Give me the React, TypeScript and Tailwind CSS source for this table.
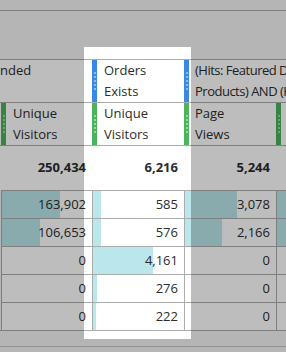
const COL_W = ['w-[91px]', 'w-[92px]', 'w-[92px]', 'w-[92px]'];

const TOTALS = ['250,434', '6,216', '5,244', '4,812'];

// value + bar width in px
const ROWS = [
  [{ v: '163,902', w: 58 }, { v: '585', w: 8 }, { v: '3,078', w: 52 }, { v: '2,941', w: 34 }],
  [{ v: '106,653', w: 38 }, { v: '576', w: 8 }, { v: '2,166', w: 37 }, { v: '1,871', w: 22 }],
  [{ v: '0', w: 0 }, { v: '4,161', w: 60 }, { v: '0', w: 0 }, { v: '0', w: 0 }],
  [{ v: '0', w: 0 }, { v: '276', w: 4 }, { v: '0', w: 0 }, { v: '0', w: 0 }],
  [{ v: '0', w: 0 }, { v: '222', w: 3 }, { v: '0', w: 0 }, { v: '0', w: 0 }],
];

function Grip({ color }: { color: string }) {
  return (
    <div className={`flex h-full w-[5px] shrink-0 flex-col items-center justify-center gap-[2px] ${color}`}>
      {[0, 1, 2, 3, 4].map((i) => (
        <span key={i} className="h-[2px] w-[2px] bg-white/45" />
      ))}
    </div>
  );
}

function HeadCell({ grip, w, pad = 'pl-[7px]', children }: { grip?: string; w: string; pad?: string; children?: React.ReactNode }) {
  return (
    <div className={`flex h-full shrink-0 ${w}`}>
      {grip && <Grip color={grip} />}
      <div className={`overflow-hidden leading-[21px] ${pad}`}>{children}</div>
    </div>
  );
}

export default function App() {
  return (
    <div className="relative h-[352px] w-[286px] overflow-hidden bg-[#f5f5f5] font-['Open_Sans',sans-serif] text-[13px] text-[#2c2c2c]">
      {/* white ghost behind the dragged column */}
      <div className="absolute left-[84px] top-[47px] h-[292px] w-[107px] bg-white" />

      <div className="relative">
        <div className="h-[11px] border-b border-[#acacac]" />
        <div className="h-[48px]" />

        {/* header row 1 */}
        <div className="flex h-[43px] border-t border-[#acacac] bg-white">
          <div className="w-[92px] shrink-0 leading-[21px]">nded</div>
          <HeadCell grip="bg-[#3a87e6]" w="w-[92px]">
            Orders
            <br />
            Exists
          </HeadCell>
          <HeadCell grip="bg-[#3a87e6]" w="w-[184px]" pad="pl-[6px] pr-[6px]">
            <span className="block h-[42px] w-[172px] tracking-[-0.5px]">(Hits: Featured Demo Products) AND (Hits: Cart)</span>
          </HeadCell>
        </div>

        {/* header row 2 */}
        <div className="flex h-[43px] border-t border-[#acacac] bg-white pl-px">
          <HeadCell grip="bg-[#4bb35a]" w="w-[91px]">
            Unique
            <br />
            Visitors
          </HeadCell>
          <HeadCell grip="bg-[#4bb35a]" w="w-[92px]">
            Unique
            <br />
            Visitors
          </HeadCell>
          <HeadCell grip="bg-[#4bb35a]" w="w-[92px]" pad="pl-[6px]">
            Page
            <br />
            Views
          </HeadCell>
          <HeadCell grip="bg-[#4bb35a]" w="w-[10px]" />
        </div>

        {/* totals */}
        <div className="flex h-[45px] items-center border-t border-[#acacac] bg-white pl-px font-bold">
          {TOTALS.map((t, i) => (
            <div key={i} className={`shrink-0 pr-[6px] text-right ${COL_W[i]}`}>
              {t}
            </div>
          ))}
        </div>

        {/* data */}
        <div className="border-b border-[#acacac] pl-px">
          {ROWS.map((row, r) => (
            <div key={r} className="flex h-[28px] border-t border-[#acacac]">
              {row.map((c, i) => (
                <div key={i} className={`relative flex shrink-0 items-center justify-end border-l border-[#acacac] bg-white pr-[6px] ${COL_W[i]}`}>
                  {c.w > 0 && <div className="absolute inset-y-0 left-0 bg-[#b9e7eb]" style={{ width: c.w }} />}
                  <span className="relative">{c.v}</span>
                </div>
              ))}
            </div>
          ))}
        </div>

        <div className="h-[16px] border-b border-[#c4c4c4]" />
      </div>

      {/* dimming overlay around the dragged column */}
      <div className="pointer-events-none absolute left-[84px] top-[47px] h-[292px] w-[107px] shadow-[0_0_0_600px_rgba(0,0,0,0.26)]" />
    </div>
  );
}
